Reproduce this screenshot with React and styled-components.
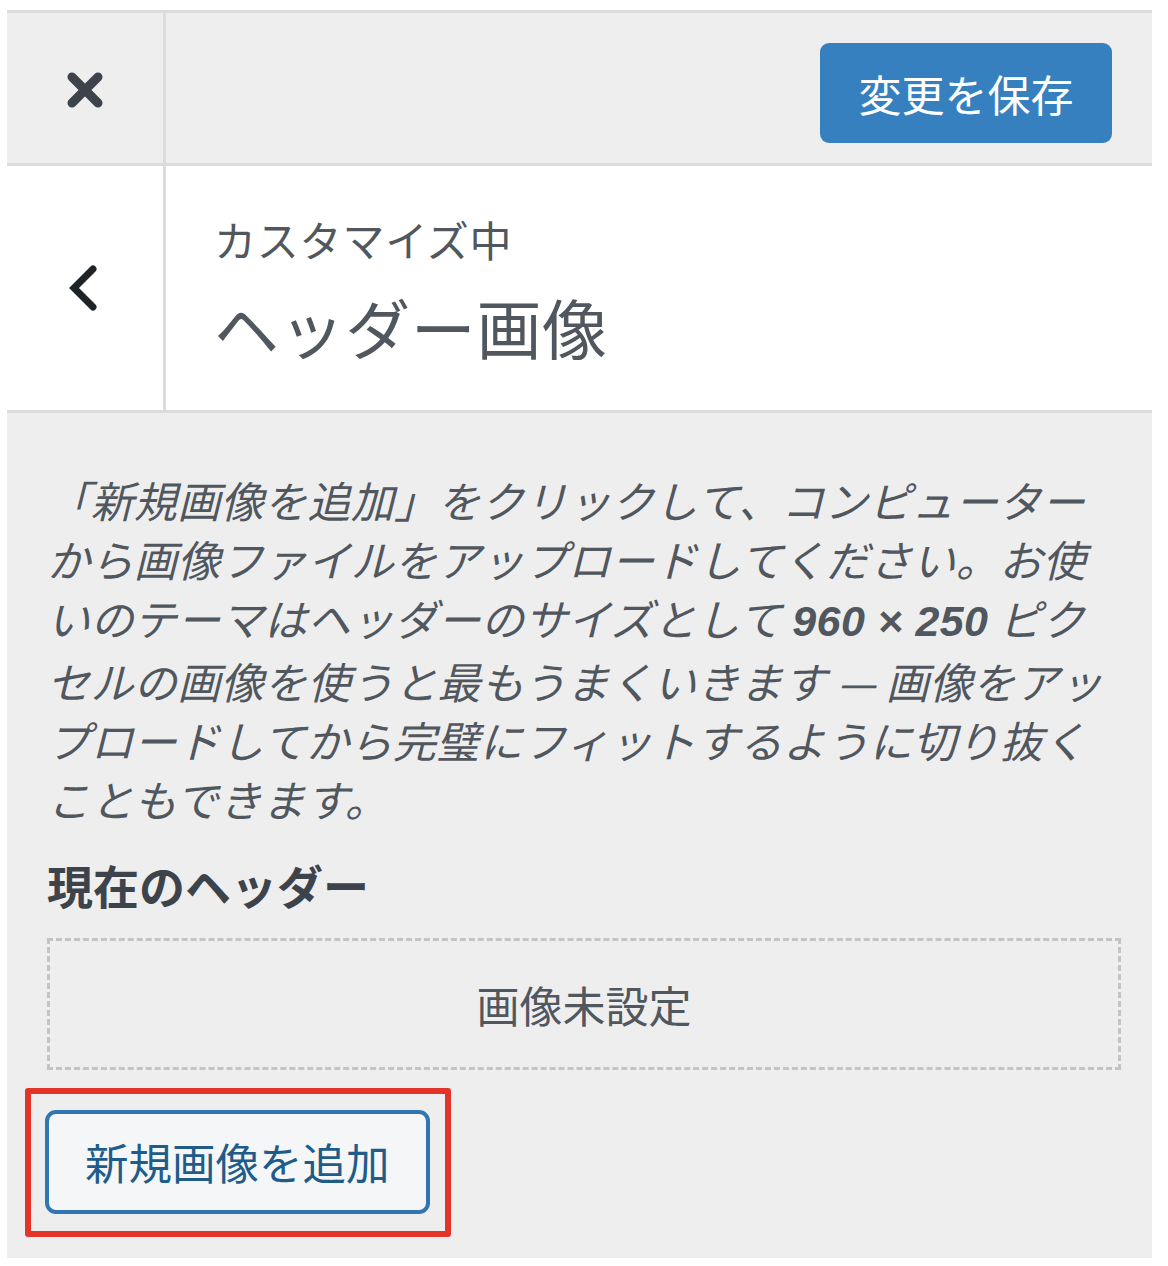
import React from "react";
import styled, { createGlobalStyle } from "styled-components";

const GlobalStyle = createGlobalStyle`
  html, body {
    margin: 0;
    padding: 0;
    background: #ffffff;
  }
  body {
    font-family: "Noto Sans CJK JP", "Noto Sans", sans-serif;
  }
`;

const Panel = styled.div`
  width: 1145px;
  margin: 10px 0 11px 7px;
  background: #eeeeee;
  border-top: 3px solid #dcdcde;
  display: flex;
  flex-direction: column;
`;

const HeaderBar = styled.div`
  display: flex;
  align-items: stretch;
  height: 150px;
  background: #eeeeee;
  border-bottom: 3px solid #dcdcde;
`;

const IconCell = styled.button`
  box-sizing: content-box;
  width: 156px;
  flex: none;
  display: flex;
  align-items: center;
  justify-content: center;
  padding: 0;
  margin: 0;
  border: none;
  border-right: 3px solid #dcdcde;
  background: ${(p) => (p.$light ? "#ffffff" : "#eeeeee")};
  cursor: pointer;
`;

const HeaderSpacer = styled.div`
  flex: 1;
`;

const SaveButton = styled.button`
  align-self: center;
  margin: 10px 40px 0 0;
  width: 292px;
  height: 100px;
  border: none;
  border-radius: 9px;
  background: #3680bf;
  color: #ffffff;
  font-family: "Noto Sans CJK JP", sans-serif;
  font-size: 43px;
  line-height: 100px;
  padding: 0;
  cursor: pointer;
`;

const SectionTitle = styled.div`
  display: flex;
  align-items: stretch;
  background: #ffffff;
  border-bottom: 3px solid #dcdcde;
`;

const TitleText = styled.div`
  flex: 1;
  padding: 34px 32px 36px 48px;
  display: flex;
  flex-direction: column;
  color: #50575e;
`;

const Action = styled.span`
  font-size: 42px;
  line-height: 78px;
  color: #50575e;
  letter-spacing: 0.8px;
`;

const Heading = styled.h3`
  margin: 0;
  font-size: 65px;
  line-height: 96px;
  font-weight: 400;
  color: #50575e;
  letter-spacing: 0.6px;
`;

const Body = styled.div`
  padding: 57px 31px 44px 40px;
  display: flex;
  flex-direction: column;
  align-items: flex-start;
`;

const Description = styled.p`
  margin: 0;
  font-size: 43px;
  line-height: 59px;
  letter-spacing: 0.4px;
  font-style: italic;
  color: #50575e;
  white-space: nowrap;

  strong {
    font-weight: 700;
    font-family: "Liberation Sans", "Noto Sans CJK JP", sans-serif;
  }
`;

const ControlTitle = styled.h4`
  margin: 26px 0 24px;
  font-size: 46px;
  line-height: 60px;
  font-weight: 700;
  color: #3c434a;
`;

const Placeholder = styled.div`
  align-self: stretch;
  height: 126px;
  border: 3px dashed #c3c4c7;
  display: flex;
  align-items: center;
  justify-content: center;
  font-size: 43px;
  color: #50575e;
`;

const Highlight = styled.div`
  position: relative;
  margin: 40px 0 0 -2px;

  &::after {
    content: "";
    position: absolute;
    top: -22px;
    left: -20px;
    right: -21px;
    bottom: -23px;
    border: 6px solid #e3342a;
    border-radius: 3px;
    pointer-events: none;
  }
`;

const AddButton = styled.button`
  display: block;
  height: 104px;
  padding: 0 36px;
  border: 4px solid #2f76b3;
  border-radius: 11px;
  background: #f4f6f8;
  color: #1f5c8a;
  font-family: "Noto Sans CJK JP", sans-serif;
  font-size: 43.5px;
  line-height: 96px;
  cursor: pointer;
`;

const CloseIcon = () => (
  <svg width="40" height="40" viewBox="0 0 40 40" style={{ marginTop: 4 }}>
    <g stroke="#3c434a" strokeWidth="9" strokeLinecap="round">
      <line x1="7" y1="7" x2="33" y2="33" />
      <line x1="33" y1="7" x2="7" y2="33" />
    </g>
  </svg>
);

const BackIcon = () => (
  <svg width="36" height="50" viewBox="0 0 36 50" style={{ marginLeft: -4 }}>
    <polyline
      points="28,6 9,25 28,44"
      fill="none"
      stroke="#1d2327"
      strokeWidth="7"
      strokeLinecap="round"
      strokeLinejoin="miter"
    />
  </svg>
);

export default function App() {
  return (
    <>
      <GlobalStyle />
      <Panel>
        <HeaderBar>
          <IconCell aria-label="閉じる">
            <CloseIcon />
          </IconCell>
          <HeaderSpacer />
          <SaveButton>変更を保存</SaveButton>
        </HeaderBar>
        <SectionTitle>
          <IconCell $light aria-label="戻る">
            <BackIcon />
          </IconCell>
          <TitleText>
            <Action>カスタマイズ中</Action>
            <Heading>ヘッダー画像</Heading>
          </TitleText>
        </SectionTitle>
        <Body>
          <Description>
            「新規画像を追加」をクリックして、コンピューター
            <br />
            から画像ファイルをアップロードしてください。お使
            <br />
            いのテーマはヘッダーのサイズとして <strong>960 × 250</strong> ピク
            <br />
            セルの画像を使うと最もうまくいきます — 画像をアッ
            <br />
            プロードしてから完璧にフィットするように切り抜く
            <br />
            こともできます。
          </Description>
          <ControlTitle>現在のヘッダー</ControlTitle>
          <Placeholder>画像未設定</Placeholder>
          <Highlight>
            <AddButton>新規画像を追加</AddButton>
          </Highlight>
        </Body>
      </Panel>
    </>
  );
}
